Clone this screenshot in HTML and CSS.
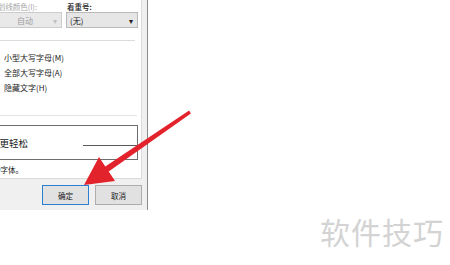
FILE: index.html
```html
<!DOCTYPE html>
<html lang="zh-CN">
<head>
<meta charset="utf-8">
<title>字体</title>
<link rel="stylesheet" href="styles.css">
</head>
<body>
<div class="dialog">
  <div class="panel">
    <div class="fields">
      <div class="field field-left">
        <div class="label disabled">下划线颜色(I):</div>
        <div class="combo combo-disabled"><span class="combo-text center">自动</span><span class="caret caret-light">&#9662;</span></div>
      </div>
      <div class="field field-right">
        <div class="label">着重号:</div>
        <div class="combo"><span class="combo-text">(无)</span><span class="caret">&#9662;</span></div>
      </div>
    </div>
    <div class="sep sep-first"></div>
    <ul class="checks">
      <li>小型大写字母(M)</li>
      <li>全部大写字母(A)</li>
      <li>隐藏文字(H)</li>
    </ul>
    <div class="sep sep-second"></div>
    <div class="preview">
      <div class="preview-slot"><span class="preview-text">让阅读更轻松</span></div>
      <span class="baseline"></span>
    </div>
    <div class="note"><span class="note-text">当前文档主题定义将使用哪种字体。</span></div>
  </div>
  <div class="buttons">
    <button class="btn btn-default">确定</button>
    <button class="btn">取消</button>
  </div>
</div>
<svg class="arrow" width="450" height="265" viewBox="0 0 450 265">
  <polygon fill="#e3232b" points="84,185 115,181 108.7,171.5 190.9,113.4 189.1,110.6 105.3,166.5 99,157"/>
</svg>
<div class="watermark">软件技巧</div>
</body>
</html>
```
FILE: styles.css
```css
* { box-sizing: border-box; }
html, body { margin: 0; padding: 0; }
body {
  width: 450px;
  height: 265px;
  overflow: hidden;
  background: #ffffff;
  position: relative;
  font-family: "Noto Sans CJK SC", "Noto Sans", sans-serif;
  color: #1a1a1a;
}
.dialog {
  margin-left: -60px;
  width: 208px;
  height: 210px;
  background: #f0f0f0;
  border-right: 1px solid #8a8a8a;
  display: flex;
  flex-direction: column;
}
.panel {
  width: 202px;
  height: 179px;
  background: #ffffff;
  border-right: 1px solid #dadada;
  border-bottom: 1px solid #dadada;
  padding-top: 2px;
}
.fields {
  display: flex;
  gap: 4px;
  padding-left: 45px;
}
.field-left { width: 77px; }
.field-right { width: 72px; }
.label {
  font-size: 7.5px;
  line-height: 10px;
  height: 10px;
  white-space: nowrap;
  text-align: right;
  padding-right: 25px;
}
.field-right .label { text-align: left; padding: 0 0 0 1px; font-weight: 500; }
.disabled { color: #a6a6a6; }
.combo {
  height: 16px;
  border: 1px solid #b9b9b9;
  background: #e6e6e6;
  display: flex;
  align-items: center;
  justify-content: space-between;
  padding: 0 4px 0 3px;
  font-size: 8px;
}
.combo-disabled { border-color: #cccccc; background: #e9e9e9; color: #a0a0a0; }
.combo-text.center { flex: 1; text-align: center; padding-left: 8px; }
.caret { font-size: 8px; color: #222; }
.caret-light { color: #c0c0c0; }
.sep {
  height: 1px;
  background: #dcdcdc;
  width: 195px;
}
.sep-first { margin-top: 12px; }
.checks {
  list-style: none;
  margin: 9px 0 0 0;
  padding: 0 0 0 64px;
  font-size: 8px;
}
.checks li { height: 15px; line-height: 15px; white-space: nowrap; }
.sep-second { margin-top: 20px; width: 197px; background: #e3e3e3; }
.preview {
  margin-top: 9px;
  margin-left: 20px;
  width: 178px;
  height: 35px;
  border: 1px solid #6e6e6e;
  display: flex;
  align-items: center;
}
.preview-slot {
  width: 67px;
  display: flex;
  justify-content: flex-end;
  overflow: hidden;
}
.preview-text {
  flex: none;
  font-size: 9.5px;
  white-space: nowrap;
}
.baseline {
  margin-left: 55px;
  margin-top: 6px;
  flex: 1;
  height: 1px;
  background: #5a5a5a;
}
.note {
  margin-top: 4px;
  width: 83px;
  display: flex;
  justify-content: flex-end;
  overflow: hidden;
}
.note-text {
  flex: none;
  font-size: 7.5px;
  line-height: 12px;
  white-space: nowrap;
}
.buttons {
  display: flex;
  gap: 6px;
  padding-left: 102px;
  margin-top: 6px;
}
.btn {
  width: 47px;
  height: 20px;
  font-family: "Noto Sans CJK SC", sans-serif;
  font-size: 7.5px;
  background: #e1e1e1;
  border: 1px solid #adadad;
  color: #1a1a1a;
  padding: 0;
}
.btn-default { border: 1.5px solid #2a7fd4; }
.arrow {
  position: absolute;
  left: 0;
  top: 0;
}
.watermark {
  position: absolute;
  left: 320px;
  top: 213px;
  font-size: 30px;
  line-height: 36px;
  color: #d3d3d3;
  letter-spacing: 1px;
  font-family: "Noto Sans CJK SC", sans-serif;
}
```
